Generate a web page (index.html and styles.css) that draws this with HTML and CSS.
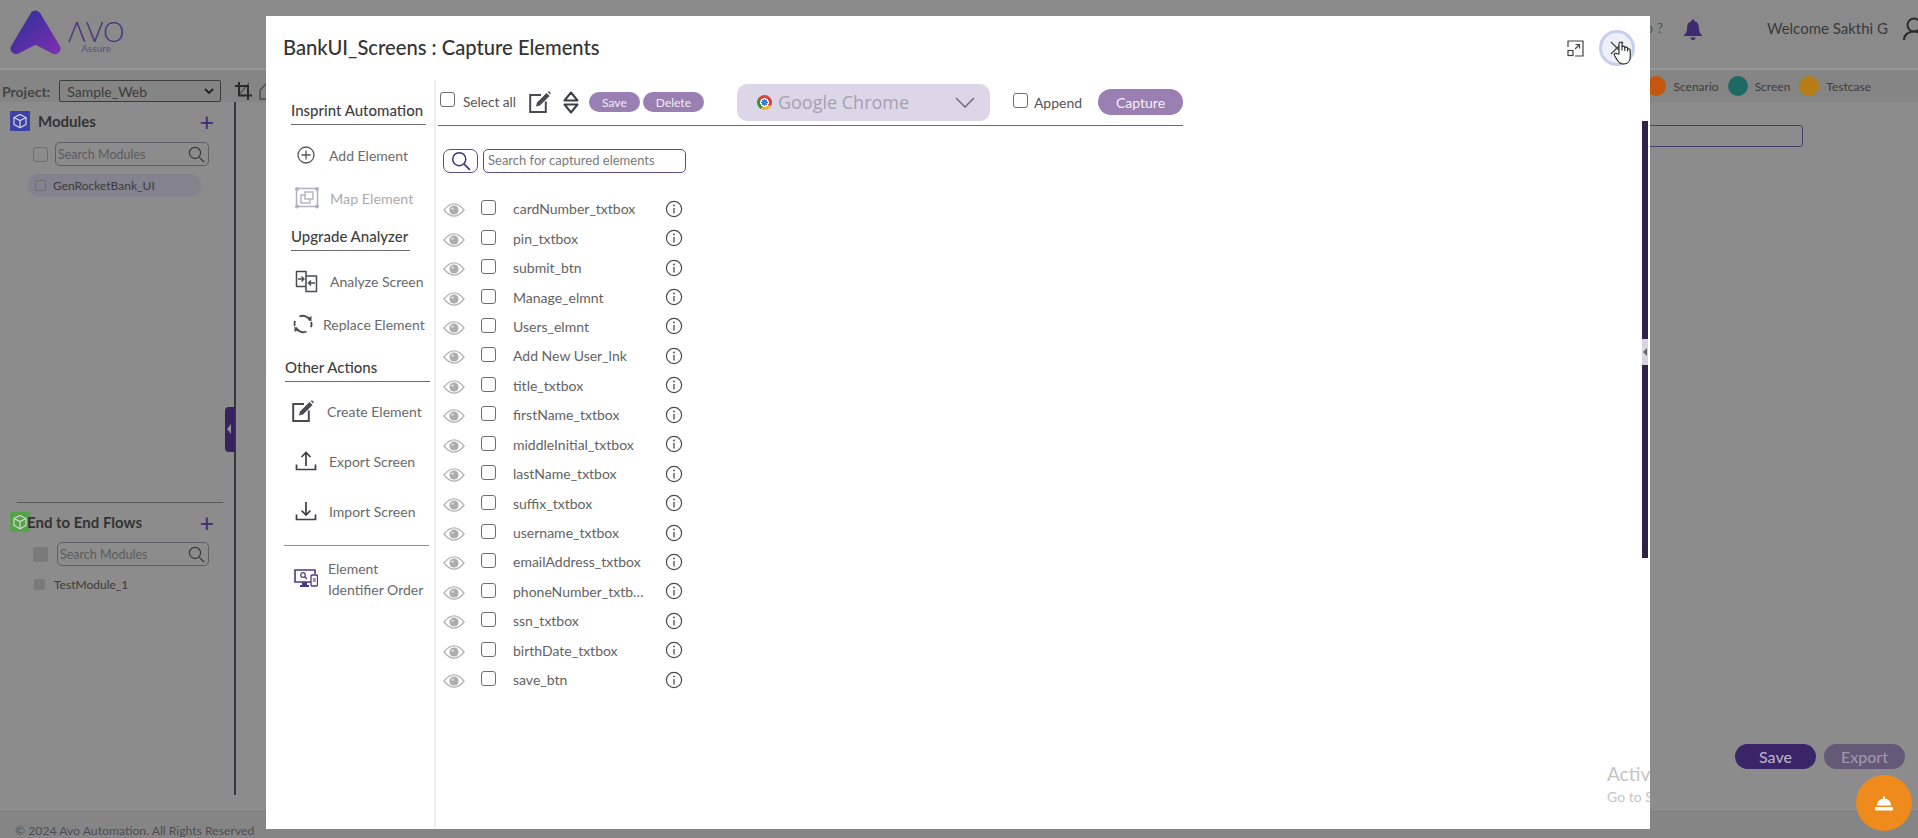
FILE: index.html
```html
<!DOCTYPE html>
<html lang="en">
<head>
<meta charset="utf-8">
<title>Avo Assure - Capture Elements</title>
<link rel="stylesheet" href="styles.css">
</head>
<body>
<svg class="defs" width="0" height="0" aria-hidden="true">
  <defs>
    <symbol id="eye" viewBox="0 0 22 14">
      <path d="M1 7C5 2 8 .8 11 .8S17 2 21 7c-4 5-7 6.2-10 6.2S5 12 1 7Z" fill="none" stroke="#b4b4b4" stroke-width="1.3"/>
      <circle cx="11" cy="7" r="4.6" fill="#adadad"/>
      <circle cx="9.6" cy="5.6" r="1.2" fill="#e2e2e2"/>
    </symbol>
    <symbol id="info" viewBox="0 0 18 18">
      <circle cx="9" cy="9" r="7.6" fill="none" stroke="#4a4a4a" stroke-width="1.2"/>
      <path d="M9 8v5.4" stroke="#4a4a4a" stroke-width="1.3"/>
      <circle cx="9" cy="5.4" r=".9" fill="#4a4a4a"/>
    </symbol>
    <symbol id="mag" viewBox="0 0 18 18">
      <circle cx="7.4" cy="7.4" r="5.9" fill="none" stroke="currentColor" stroke-width="1.3"/>
      <path d="M11.8 11.8 17 17" stroke="currentColor" stroke-width="1.4"/>
    </symbol>
    <symbol id="cube" viewBox="0 0 20 20">
      <path d="M10 3.5 16 6.5V13.5L10 16.8 4 13.5V6.5Z" fill="none" stroke="#d8d8d8" stroke-width="1.2"/>
      <path d="M4 6.5 10 9.6 16 6.5M10 9.6V16.8" fill="none" stroke="#d8d8d8" stroke-width="1.2"/>
    </symbol>
    <symbol id="edit" viewBox="0 0 22 22">
      <path d="M12 4H1.2v17h15.6V10.5" fill="none" stroke="#4a4a55" stroke-width="2"/>
      <path d="M7 15.500 8 11.400 17.500 2 20.600 5 11 14.500Z" fill="#4a4a55"/>
      <path d="M18.600 1 20 .2 21.800 2l-.6 1.600Z" fill="#4a4a55"/>
    </symbol>
  </defs>
</svg>

<div class="app">
  <header class="topbar">
    <svg class="logo-mark" viewBox="0 0 51 46" width="51" height="46" aria-hidden="true">
      <defs>
        <linearGradient id="logoGrad" x1="8" y1="4" x2="44" y2="44" gradientUnits="userSpaceOnUse">
          <stop offset="0" stop-color="#2f2f9a"/>
          <stop offset="1" stop-color="#7a2fb0"/>
        </linearGradient>
      </defs>
      <path d="M25.500 7 6 39.500 25.500 29.500 45 39.500Z" fill="url(#logoGrad)" stroke="url(#logoGrad)" stroke-width="11" stroke-linejoin="round"/>
    </svg>
    <div class="logo-text">
      <span class="logo-word">ΛVO</span>
      <span class="logo-sub">Assure</span>
    </div>
    <div class="top-right">
      <span class="help">Help ?</span>
      <svg class="bell" width="20" height="22" viewBox="0 0 20 22" aria-hidden="true">
        <path d="M10 .5c1 0 1.600.7 1.600 1.700C15 3 16 6 16 9.500c0 3 1 4.800 3 6.500v1H1v-1c2-1.700 3-3.500 3-6.500C4 6 5 3 8.400 2.200 8.400 1.200 9 .5 10 .5Z" fill="#3f2a70"/>
        <path d="M7.500 18.500h5a2.500 2.500 0 0 1-5 0Z" fill="#3f2a70"/>
      </svg>
      <span class="welcome">Welcome Sakthi G</span>
      <svg class="user" width="22" height="24" viewBox="0 0 22 24" aria-hidden="true">
        <circle cx="11" cy="8" r="6.500" fill="none" stroke="#2b2b2b" stroke-width="2"/>
        <path d="M1 23c0-5 4-8.500 10-8.500S21 18 21 23" fill="none" stroke="#2b2b2b" stroke-width="2"/>
      </svg>
    </div>
  </header>

  <div class="projectbar">
    <span class="project-label">Project:</span>
    <div class="project-select">
      <span>Sample_Web</span>
      <svg width="10" height="6" viewBox="0 0 10 6" aria-hidden="true"><path d="M1 1l4 4 4-4" fill="none" stroke="#222" stroke-width="1.800"/></svg>
    </div>
    <svg class="crop" width="17" height="18" viewBox="0 0 17 18" aria-hidden="true">
      <path d="M4 0v13.500h13M0 4h13v14" fill="none" stroke="#2b2b2b" stroke-width="2"/>
      <path d="M14 1 3 14" stroke="#2b2b2b" stroke-width="1"/>
    </svg>
    <svg class="crop-next" width="14" height="18" viewBox="0 0 14 18" aria-hidden="true">
      <path d="M1 8 8 1h5v16H1Z" fill="none" stroke="#4a4a4a" stroke-width="1.400"/>
    </svg>
    <div class="legend">
      <span class="dot dot-scenario"></span><span class="legend-text">Scenario</span>
      <span class="dot dot-screen"></span><span class="legend-text">Screen</span>
      <span class="dot dot-testcase"></span><span class="legend-text">Testcase</span>
    </div>
  </div>

  <main class="workspace">
    <aside class="sidebar">
      <section class="side-section side-modules">
        <div class="side-head">
          <span class="cube-box cube-blue"><svg width="20" height="20"><use href="#cube"/></svg></span>
          <span class="side-title">Modules</span>
          <span class="plus">+</span>
        </div>
        <div class="side-search side-search-modules">
          <input class="chk" type="checkbox">
          <div class="search-box"><span>Search Modules</span><svg width="17" height="17"><use href="#mag"/></svg></div>
        </div>
        <div class="module-row">
          <input class="chk chk-sm" type="checkbox">
          <span>GenRocketBank_UI</span>
        </div>
      </section>
      <section class="side-section side-flows">
        <div class="side-head side-head-flows">
          <span class="cube-box cube-green"><svg width="20" height="20"><use href="#cube"/></svg></span>
          <span class="side-title side-title-flows">End to End Flows</span>
          <span class="plus">+</span>
        </div>
        <div class="side-search side-search-flows">
          <span class="chk-filled"></span>
          <div class="search-box search-box-flow"><span>Search Modules</span><svg width="17" height="17"><use href="#mag"/></svg></div>
        </div>
        <div class="flow-row">
          <span class="chk-filled chk-filled-sm"></span>
          <span>TestModule_1</span>
        </div>
      </section>
      <span class="collapse-handle"></span>
    </aside>
    <div class="canvas">
      <div class="canvas-input"></div>
      <div class="canvas-actions">
        <span class="canvas-btn canvas-save">Save</span>
        <span class="canvas-btn canvas-export">Export</span>
      </div>
    </div>
  </main>

  <footer class="footer">© 2024 Avo Automation. All Rights Reserved</footer>
</div>

<section class="modal">
  <div class="modal-head">
    <h1 class="modal-title">BankUI_Screens : Capture Elements</h1>
    <svg class="expand" width="17" height="17" viewBox="0 0 17 17" aria-hidden="true">
      <path d="M1 7V1h15v15H8" fill="none" stroke="#444" stroke-width="1.200"/>
      <rect x="1" y="10.500" width="5" height="5" fill="none" stroke="#444" stroke-width="1.200"/>
      <path d="M8 9l4.500-4.500M8.500 4.500h4v4" fill="none" stroke="#444" stroke-width="1.200"/>
    </svg>
    <div class="close-btn">
      <svg class="close-x" width="14" height="14" viewBox="0 0 14 14" aria-hidden="true"><path d="M1 1l12 12M13 1 1 13" stroke="#444" stroke-width="1.300"/></svg>
      <svg class="hand" width="20" height="25" viewBox="0 0 20 25" aria-hidden="true">
        <path d="M6 14V3.500a1.500 1.500 0 0 1 3 0V10l0-2.500a1.400 1.400 0 0 1 2.800 0V10.500 8.500a1.400 1.400 0 0 1 2.800 0v2.500-1a1.300 1.300 0 0 1 2.600 0V17c0 4-2.400 7-6.500 7-3.500 0-5-1.500-6.500-4L1.500 15.500c-1-1.800 1.500-3 2.700-1.500Z" fill="#fff" stroke="#222" stroke-width="1.100" stroke-linejoin="round"/>
      </svg>
    </div>
  </div>

  <div class="modal-body">
    <nav class="modal-nav">
      <h2 class="nav-heading nav-h1">Insprint Automation</h2>
      <div class="nav-item nav-item-add">
        <svg width="22" height="22" viewBox="0 0 22 22" aria-hidden="true"><circle cx="11" cy="11" r="8" fill="none" stroke="#555" stroke-width="1.300"/><path d="M11 6.500v9M6.500 11h9" stroke="#555" stroke-width="1.300"/></svg>
        <span>Add Element</span>
      </div>
      <div class="nav-item nav-item-muted">
        <svg width="24" height="23" viewBox="0 0 24 23" aria-hidden="true">
          <rect x="1.500" y="1.500" width="21" height="18" fill="none" stroke="#b3b1c0" stroke-width="1.500"/>
          <rect x="6" y="8" width="9" height="8" fill="none" stroke="#b3b1c0" stroke-width="1.400"/>
          <rect x="10" y="5" width="8" height="7" fill="#fff" stroke="#b3b1c0" stroke-width="1.400"/>
          <g fill="#b3b1c0"><circle cx="2" cy="2" r="2"/><circle cx="22" cy="2" r="2"/><circle cx="2" cy="19.500" r="2"/><circle cx="22" cy="19.500" r="2"/></g>
        </svg>
        <span>Map Element</span>
      </div>
      <h2 class="nav-heading nav-h2">Upgrade Analyzer</h2>
      <div class="nav-item nav-item-analyze">
        <svg width="23" height="23" viewBox="0 0 23 23" aria-hidden="true">
          <path d="M11 1.500H1.500v15H11ZM11 6h10.500v15.500H11Z" fill="none" stroke="#4a4a55" stroke-width="1.500" stroke-linejoin="round"/>
          <path d="M3 9h6M6.500 6.500 9 9l-2.500 2.500M20 13h-6.500M16 10.500 13.500 13l2.500 2.500" fill="none" stroke="#4a4a55" stroke-width="1.400"/>
        </svg>
        <span>Analyze Screen</span>
      </div>
      <div class="nav-item nav-item-replace">
        <svg width="20" height="20" viewBox="0 0 20 20" aria-hidden="true">
          <path d="M6.500 2.500A8.200 8.200 0 0 1 17.200 6.500M13.500 17.500A8.200 8.200 0 0 1 2.800 13.500" fill="none" stroke="#4a4a55" stroke-width="1.900"/>
          <path d="M2 6.800A8.200 8.200 0 0 0 1.800 12M18 13.200A8.200 8.200 0 0 0 18.200 8" fill="none" stroke="#4a4a55" stroke-width="1.900"/>
          <path d="M14.500 4.500 18.500 2 18.500 7.500ZM5.500 15.500 1.500 18 1.500 12.500Z" fill="#4a4a55"/>
        </svg>
        <span>Replace Element</span>
      </div>
      <h2 class="nav-heading nav-h3">Other Actions</h2>
      <div class="nav-item nav-item-create">
        <svg width="22" height="22"><use href="#edit"/></svg>
        <span>Create Element</span>
      </div>
      <div class="nav-item nav-item-export">
        <svg width="22" height="22" viewBox="0 0 22 22" aria-hidden="true"><path d="M1.500 14.500v5h19v-5M11 16V2.500M6.500 7 11 2.500 15.500 7" fill="none" stroke="#3e3e4a" stroke-width="1.700"/></svg>
        <span>Export Screen</span>
      </div>
      <div class="nav-item nav-item-import">
        <svg width="22" height="22" viewBox="0 0 22 22" aria-hidden="true"><path d="M1.500 14.500v5h19v-5M11 2v13M6.500 10.500 11 15l4.500-4.500" fill="none" stroke="#3e3e4a" stroke-width="1.700"/></svg>
        <span>Import Screen</span>
      </div>
      <hr class="nav-rule">
      <div class="nav-item nav-item-order">
        <svg width="24" height="20" viewBox="0 0 24 20" aria-hidden="true">
          <path d="M17 13H1V1h20v4" fill="none" stroke="#4b3a80" stroke-width="1.600"/>
          <circle cx="9" cy="6" r="2.300" fill="none" stroke="#4b3a80" stroke-width="1.200"/>
          <path d="M10.800 7.800 13 10" stroke="#4b3a80" stroke-width="1.300"/>
          <path d="M8 13h5v3h2v2H6v-2h2Z" fill="#4b3a80"/>
          <rect x="17" y="6" width="6.500" height="11" rx="1" fill="#fff" stroke="#4b3a80" stroke-width="1.300"/>
          <rect x="18.800" y="9" width="3" height="4" fill="#4b3a80" opacity=".55"/>
        </svg>
        <span>Element<br>Identifier Order</span>
      </div>
    </nav>

    <div class="modal-content">
      <div class="capture-bar">
        <input class="chk chk-select" type="checkbox">
        <span class="select-all">Select all</span>
        <svg class="bar-edit" width="22" height="22"><use href="#edit"/></svg>
        <svg class="bar-sort" width="16" height="23" viewBox="0 0 16 23" aria-hidden="true">
          <path d="M8 1.500 14.500 9.500H1.500ZM1.500 13.500H14.500L8 21.500Z" fill="none" stroke="#3e3e4a" stroke-width="2" stroke-linejoin="round"/>
        </svg>
        <span class="pill pill-save">Save</span>
        <span class="pill pill-delete">Delete</span>
        <div class="browser-select">
          <span class="chrome-icon"></span>
          <span class="browser-name">Google Chrome</span>
          <svg width="20" height="11" viewBox="0 0 20 11" aria-hidden="true"><path d="M1 1l9 9 9-9" fill="none" stroke="#6f6a80" stroke-width="1.500"/></svg>
        </div>
        <input class="chk chk-append" type="checkbox">
        <span class="append">Append</span>
        <span class="pill-capture">Capture</span>
      </div>

      <div class="element-search">
        <span class="search-btn"><svg width="20" height="20"><use href="#mag"/></svg></span>
        <div class="search-field">Search for captured elements</div>
      </div>

      <ul class="element-list">
        <li class="element"><svg class="eye" width="22" height="14"><use href="#eye"/></svg><input class="chk" type="checkbox"><span class="element-name">cardNumber_txtbox</span><svg class="info" width="18" height="18"><use href="#info"/></svg></li>
        <li class="element"><svg class="eye" width="22" height="14"><use href="#eye"/></svg><input class="chk" type="checkbox"><span class="element-name">pin_txtbox</span><svg class="info" width="18" height="18"><use href="#info"/></svg></li>
        <li class="element"><svg class="eye" width="22" height="14"><use href="#eye"/></svg><input class="chk" type="checkbox"><span class="element-name">submit_btn</span><svg class="info" width="18" height="18"><use href="#info"/></svg></li>
        <li class="element"><svg class="eye" width="22" height="14"><use href="#eye"/></svg><input class="chk" type="checkbox"><span class="element-name">Manage_elmnt</span><svg class="info" width="18" height="18"><use href="#info"/></svg></li>
        <li class="element"><svg class="eye" width="22" height="14"><use href="#eye"/></svg><input class="chk" type="checkbox"><span class="element-name">Users_elmnt</span><svg class="info" width="18" height="18"><use href="#info"/></svg></li>
        <li class="element"><svg class="eye" width="22" height="14"><use href="#eye"/></svg><input class="chk" type="checkbox"><span class="element-name">Add New User_lnk</span><svg class="info" width="18" height="18"><use href="#info"/></svg></li>
        <li class="element"><svg class="eye" width="22" height="14"><use href="#eye"/></svg><input class="chk" type="checkbox"><span class="element-name">title_txtbox</span><svg class="info" width="18" height="18"><use href="#info"/></svg></li>
        <li class="element"><svg class="eye" width="22" height="14"><use href="#eye"/></svg><input class="chk" type="checkbox"><span class="element-name">firstName_txtbox</span><svg class="info" width="18" height="18"><use href="#info"/></svg></li>
        <li class="element"><svg class="eye" width="22" height="14"><use href="#eye"/></svg><input class="chk" type="checkbox"><span class="element-name">middleInitial_txtbox</span><svg class="info" width="18" height="18"><use href="#info"/></svg></li>
        <li class="element"><svg class="eye" width="22" height="14"><use href="#eye"/></svg><input class="chk" type="checkbox"><span class="element-name">lastName_txtbox</span><svg class="info" width="18" height="18"><use href="#info"/></svg></li>
        <li class="element"><svg class="eye" width="22" height="14"><use href="#eye"/></svg><input class="chk" type="checkbox"><span class="element-name">suffix_txtbox</span><svg class="info" width="18" height="18"><use href="#info"/></svg></li>
        <li class="element"><svg class="eye" width="22" height="14"><use href="#eye"/></svg><input class="chk" type="checkbox"><span class="element-name">username_txtbox</span><svg class="info" width="18" height="18"><use href="#info"/></svg></li>
        <li class="element"><svg class="eye" width="22" height="14"><use href="#eye"/></svg><input class="chk" type="checkbox"><span class="element-name">emailAddress_txtbox</span><svg class="info" width="18" height="18"><use href="#info"/></svg></li>
        <li class="element"><svg class="eye" width="22" height="14"><use href="#eye"/></svg><input class="chk" type="checkbox"><span class="element-name">phoneNumber_txtbox</span><svg class="info" width="18" height="18"><use href="#info"/></svg></li>
        <li class="element"><svg class="eye" width="22" height="14"><use href="#eye"/></svg><input class="chk" type="checkbox"><span class="element-name">ssn_txtbox</span><svg class="info" width="18" height="18"><use href="#info"/></svg></li>
        <li class="element"><svg class="eye" width="22" height="14"><use href="#eye"/></svg><input class="chk" type="checkbox"><span class="element-name">birthDate_txtbox</span><svg class="info" width="18" height="18"><use href="#info"/></svg></li>
        <li class="element"><svg class="eye" width="22" height="14"><use href="#eye"/></svg><input class="chk" type="checkbox"><span class="element-name">save_btn</span><svg class="info" width="18" height="18"><use href="#info"/></svg></li>
      </ul>
    </div>
  </div>

  <div class="scrollbar"><span class="scroll-handle"></span></div>
  <div class="watermark"><span class="wm-big">Activ</span><span class="wm-small">Go to S</span></div>
</section>

<div class="fab">
  <svg width="20" height="17" viewBox="0 0 20 17" aria-hidden="true">
    <path d="M3 10.500a7 7 0 0 1 14 0Z" fill="#fff"/>
    <rect x="9" y="1.500" width="2" height="3" fill="#fff"/>
    <rect x="1" y="12" width="18" height="3.500" rx="1" fill="#fff"/>
  </svg>
</div>
</body>
</html>
```
FILE: styles.css
```css
* { box-sizing: border-box; }
html, body { margin: 0; padding: 0; }
body {
  position: relative;
  width: 1918px;
  height: 838px;
  overflow: hidden;
  background: #8c8c8c;
  font-family: "Lato", "Liberation Sans", sans-serif;
  color: #444;
}
.defs { position: absolute; }

.chk {
  appearance: none;
  -webkit-appearance: none;
  flex: none;
  width: 15px;
  height: 15px;
  margin: 0;
  background: transparent;
  border: 1px solid #6e6e6e;
  border-radius: 3px;
}
.chk-sm { width: 11px; height: 11px; border-radius: 2px; }

/* background application */
.app { display: flex; flex-direction: column; height: 838px; }
.topbar {
  display: flex;
  align-items: flex-start;
  flex: none;
  height: 70px;
  padding: 9px 0 0 10px;
  background: #8a8a8a;
  border-bottom: 2px solid #959595;
}
.logo-mark { flex: none; }
.logo-text { display: flex; flex-direction: column; align-items: center; margin: 12px 0 0 7px; }
.logo-word { font-size: 27px; line-height: 22px; font-weight: 300; color: #45307f; }
.logo-sub { font-size: 10px; line-height: 10px; color: #5f4b93; }
.top-right { display: flex; align-items: center; margin-left: auto; height: 37px; }
.help { font-size: 14px; color: #555; }
.bell { margin: 5px 0 0 20px; }
.welcome { margin-left: 64px; font-size: 15px; color: #3a3a3a; }
.user { margin: 3px -7px 0 15px; }

.projectbar {
  display: flex;
  align-items: center;
  flex: none;
  height: 32px;
  padding-left: 2px;
  background: #858585;
}
.project-label { margin-top: 10px; font-size: 14px; font-weight: 700; color: #444; }
.project-select {
  display: flex;
  align-items: center;
  justify-content: space-between;
  width: 162px;
  height: 22px;
  margin: 10px 0 0 9px;
  padding: 0 6px 0 7px;
  border: 1px solid #3c3c3c;
  border-radius: 2px;
  font-size: 14px;
  color: #3c3c3c;
}
.crop { margin: 10px 0 0 14px; flex: none; }
.crop-next { margin: 10px 0 0 7px; flex: none; }
.legend { display: flex; align-items: center; margin-left: auto; padding-right: 47px; }
.dot { width: 20px; height: 20px; border-radius: 50%; }
.dot-scenario { background: #c4570f; }
.dot-screen { background: #1d6a64; margin-left: 9px; }
.dot-testcase { background: #b57d14; margin-left: 9px; }
.legend-text { margin-left: 7px; font-size: 12px; color: #3d3d3d; }

.workspace { display: flex; flex: 1; min-height: 0; }
.sidebar {
  position: relative;
  display: flex;
  flex-direction: column;
  flex: none;
  width: 236px;
  margin-bottom: 16px;
  border-right: 2px solid #37373f;
}
.side-section { display: flex; flex-direction: column; }
.side-modules { height: 400px; padding-top: 6px; }
.side-flows { flex: 1; }
.side-head { display: flex; align-items: center; height: 25px; padding-left: 10px; }
.side-head-flows { margin-top: 9px; height: 20px; }
.cube-box { display: flex; flex: none; width: 20px; height: 20px; border-radius: 1px; }
.cube-blue { background: #3c42a8; }
.cube-green { background: #55a348; }
.side-title { margin-left: 8px; font-size: 15px; font-weight: 700; color: #333; }
.side-title-flows { margin-left: -3px; }
.plus { margin-left: auto; margin-right: 20px; font-size: 25px; line-height: 20px; font-weight: 400; color: #3a2d78; }
.side-search { display: flex; align-items: center; padding-left: 33px; }
.side-search-modules { margin-top: 9px; }
.side-search-flows { margin-top: 10px; }
.search-box {
  display: flex;
  align-items: center;
  justify-content: space-between;
  width: 154px;
  height: 24px;
  margin-left: 7px;
  padding: 0 3px 0 2px;
  border: 1px solid #5d5d66;
  border-radius: 5px;
  font-size: 12.500px;
  color: #5c5c5c;
}
.search-box svg { color: #3a3a3a; }
.search-box-flow { width: 152px; margin-left: 9px; }
.module-row {
  display: flex;
  align-items: center;
  gap: 7px;
  width: 173px;
  height: 23px;
  margin: 8px 0 0 28px;
  padding-left: 7px;
  border-radius: 11px;
  background: #85828f;
  font-size: 12px;
  color: #3a3a3a;
}
.side-flows::before {
  content: "";
  display: block;
  height: 1px;
  margin: 0 11px 0 17px;
  background: #5a5a5a;
}
.chk-filled { display: block; flex: none; width: 15px; height: 15px; border-radius: 2px; background: #7a7a7a; }
.chk-filled-sm { width: 11px; height: 11px; }
.flow-row { display: flex; align-items: center; gap: 9px; margin: 11px 0 0 34px; font-size: 12px; color: #3a3a3a; }
.collapse-handle {
  position: absolute;
  left: 225px;
  top: 305px;
  width: 10px;
  height: 45px;
  border-radius: 4px 0 0 4px;
  background: #35245f;
}
.collapse-handle::after {
  content: "";
  position: absolute;
  left: 2px;
  top: 17px;
  border-top: 5px solid transparent;
  border-bottom: 5px solid transparent;
  border-right: 4px solid #8f8f9a;
}

.canvas { display: flex; flex-direction: column; flex: 1; min-width: 0; }
.canvas-input {
  flex: none;
  width: 500px;
  height: 22px;
  margin: 23px 115px 0 auto;
  border: 1px solid #4a3f6a;
  border-radius: 3px;
}
.canvas-actions { display: flex; justify-content: flex-end; gap: 8px; margin-top: auto; padding: 0 13px 42px 0; }
.canvas-btn {
  display: flex;
  align-items: center;
  justify-content: center;
  width: 81px;
  height: 25px;
  border-radius: 13px;
  font-size: 16px;
  font-weight: 500;
  color: #a9a4b6;
}
.canvas-save { background: #3b2467; color: #b6b0c6; }
.canvas-export { background: #645a78; color: #9c97a8; }

.footer {
  flex: none;
  height: 27px;
  padding: 12px 0 0 15px;
  border-top: 1px solid #7e7e7e;
  background: #858585;
  font-size: 12.200px;
  line-height: 14px;
  color: #4d4d55;
  white-space: nowrap;
}

/* modal */
.modal {
  position: absolute;
  left: 266px;
  top: 16px;
  display: flex;
  flex-direction: column;
  width: 1384px;
  height: 813px;
  overflow: hidden;
  background: #fff;
}
.modal-head { display: flex; align-items: center; flex: none; height: 64px; padding: 0 15px 0 17px; }
.modal-title { margin: -2px 0 0; font-size: 20.200px; font-weight: 500; color: #333; }
.expand { margin-left: auto; }
.close-btn {
  position: relative;
  display: flex;
  align-items: center;
  justify-content: center;
  width: 36px;
  height: 36px;
  margin-left: 15px;
  border: 3px solid #c8cfee;
  border-radius: 50%;
  background: #eef0f8;
}
.hand { position: absolute; left: 11px; top: 7px; }

.modal-body { display: flex; flex: 1; min-height: 0; }
.modal-nav {
  display: flex;
  flex-direction: column;
  flex: none;
  align-items: flex-start;
  width: 170px;
  padding: 20px 0 0 17px;
  border-right: 2px solid #efefef;
}
.nav-heading {
  margin: 0;
  height: 25px;
  font-size: 15px;
  line-height: 21px;
  font-weight: 500;
  color: #3f3f3f;
  border-bottom: 1px solid #6b6b6b;
  white-space: nowrap;
}
.nav-h1 { margin-left: 8px; width: 135px; }
.nav-h2 { margin: 7px 0 0 8px; width: 119px; }
.nav-h3 { margin: 12px 0 0 2px; width: 145px; }
.nav-item {
  display: flex;
  align-items: center;
  flex: none;
  gap: 12px;
  height: 42px;
  padding-left: 12px;
  font-size: 14px;
  color: #6a6a6a;
  white-space: nowrap;
}
.nav-item svg { flex: none; }
.nav-item-add { margin-top: 9px; }
.nav-item-muted { margin-top: 1px; padding-left: 12px; gap: 11px; color: #ababab; font-size: 14.300px; }
.nav-item-analyze { margin-top: 9px; }
.nav-item-replace { margin-top: 1px; padding-left: 10px; gap: 10px; }
.nav-item-create { margin-top: 8px; padding-left: 9px; gap: 13px; }
.nav-item-export { margin-top: 8px; }
.nav-item-import { margin-top: 8px; }
.nav-rule { align-self: stretch; height: 1px; margin: 13px 5px 0 1px; border: 0; background: #8c8c8c; }
.nav-item-order { height: 50px; margin-top: 8px; padding-left: 11px; gap: 10px; line-height: 21px; }

.modal-content { flex: 1; min-width: 0; padding-left: 2px; }
.capture-bar {
  display: flex;
  align-items: center;
  width: 745px;
  height: 44px;
  margin-top: 2px;
  padding-bottom: 3px;
  border-bottom: 1px solid #6a6a6a;
}
.chk-select { margin: -5px 0 0 2px; }
.select-all { margin-left: 8px; font-size: 13.600px; color: #555; }
.bar-edit { margin-left: 13px; flex: none; }
.bar-sort { margin-left: 12px; flex: none; }
.pill {
  display: flex;
  align-items: center;
  justify-content: center;
  height: 20px;
  border-radius: 10px;
  background: #9a7fb3;
  font-size: 12px;
  color: #f1ecf6;
}
.pill-save { width: 51px; margin-left: 10px; }
.pill-delete { width: 61px; margin-left: 3px; }
.browser-select {
  display: flex;
  align-items: center;
  width: 253px;
  height: 37px;
  margin-left: 33px;
  padding: 0 15px 0 20px;
  border-radius: 10px;
  background: #dcd6e9;
}
.chrome-icon {
  flex: none;
  width: 15px;
  height: 15px;
  border-radius: 50%;
  background:
    radial-gradient(circle, #3f7fd0 0 3px, #fff 3.200px 4.300px, transparent 4.500px),
    conic-gradient(#d9443a 0 120deg, #e8b52a 120deg 210deg, #37913f 210deg 300deg, #d9443a 300deg);
}
.browser-name { margin-left: 6px; font-family: "Open Sans", sans-serif; font-size: 18px; color: #a5a1ad; }
.browser-select svg { margin-left: auto; }
.chk-append { margin-left: 23px; margin-top: -4px; }
.append { margin-left: 6px; font-size: 14px; color: #555; }
.pill-capture {
  display: flex;
  align-items: center;
  justify-content: center;
  width: 85px;
  height: 26px;
  margin-left: auto;
  border-radius: 13px;
  background: #9a7fb3;
  font-size: 14px;
  color: #f4f0f8;
}

.element-search { display: flex; gap: 5px; margin: 23px 0 0 5px; }
.search-btn {
  display: flex;
  align-items: center;
  justify-content: center;
  width: 35px;
  height: 24px;
  border: 1px solid #5e4d85;
  border-radius: 7px;
  color: #3f3470;
}
.search-field {
  width: 203px;
  height: 24px;
  padding-left: 4px;
  border: 1px solid #5e4d85;
  border-radius: 5px;
  font-size: 13px;
  line-height: 21px;
  color: #7a7a7a;
}
.element-list { margin: 21px 0 0; padding: 0 0 0 5px; list-style: none; }
.element { display: flex; align-items: center; height: 29.440px; }
.eye { flex: none; margin-top: 3px; }
.element .chk { margin: -2px 0 0 16px; }
.element-name {
  width: 133px;
  margin-left: 17px;
  overflow: hidden;
  text-overflow: ellipsis;
  white-space: nowrap;
  font-size: 14px;
  color: #636363;
}
.info { flex: none; margin-left: 19px; }

.scrollbar {
  position: absolute;
  left: 1376px;
  top: 105px;
  width: 6px;
  height: 437px;
  background: #2f2347;
}
.scroll-handle {
  position: absolute;
  left: 0;
  top: 218px;
  width: 6px;
  height: 26px;
  background: #d8d3e2;
}
.scroll-handle::after {
  content: "";
  position: absolute;
  left: 1px;
  top: 9px;
  border-top: 4px solid transparent;
  border-bottom: 4px solid transparent;
  border-right: 4px solid #666;
}
.watermark {
  position: absolute;
  left: 1341px;
  top: 746px;
  display: flex;
  flex-direction: column;
  color: #c4c4c4;
  white-space: nowrap;
}
.wm-big { font-size: 19px; line-height: 24px; }
.wm-small { font-size: 14px; line-height: 22px; }

.fab {
  position: absolute;
  left: 1856px;
  top: 775px;
  display: flex;
  align-items: center;
  justify-content: center;
  width: 56px;
  height: 56px;
  border-radius: 50%;
  background: #ef8a1d;
}
```
